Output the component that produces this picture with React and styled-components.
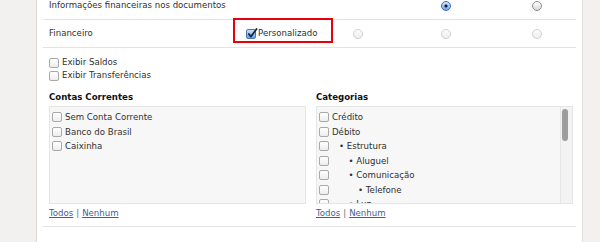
import React from "react";
import styled, { createGlobalStyle } from "styled-components";

const GlobalStyle = createGlobalStyle`
  html, body { margin: 0; padding: 0; background: #fff; }
  body {
    font-family: "DejaVu Sans", Verdana, sans-serif;
    font-size: 8.6px;
    color: #303030;
    overflow: hidden;
  }
`;

const Page = styled.div`
  display: flex;
  height: 242px;
  overflow: hidden;
`;

const SideLeft = styled.div`
  flex: none;
  width: 36px;
  background: #f3f1ef;
  border-right: 1px solid #dcd8d4;
`;

const SideRight = styled.div`
  flex: none;
  width: 17px;
  background: #f3f1ef;
  border-left: 1px solid #e4e0dc;
`;

const Main = styled.main`
  flex: 1;
  padding: 0 6px;
  overflow: hidden;
`;

/* the page is scrolled a little: the first row is cut at the top */
const Scrolled = styled.div`
  margin-top: -8px;
`;

const Row = styled.div`
  display: grid;
  grid-template-columns: 190px 100px 50px 126px 56px 1fr;
  align-items: center;
  height: 27px;
  border-bottom: 1px solid #e3e3e3;
`;

const Label = styled.div`
  padding-left: 6px;
  white-space: nowrap;
  line-height: 13px;
`;

const Highlighted = styled.div`
  position: relative;
  height: 100%;
  display: flex;
  align-items: center;
  gap: 2px;
  padding-left: 13px;
  line-height: 13px;

  &::before {
    content: "";
    position: absolute;
    left: 0;
    top: -2px;
    width: 100px;
    height: 25px;
    box-sizing: border-box;
    border: 2px solid #e8000b;
  }
`;

const Radio = styled.span`
  justify-self: center;
  width: 10px;
  height: 10px;
  box-sizing: border-box;
  border-radius: 50%;
  border: 1px solid
    ${(p) => (p.$checked ? "#3d6fb8" : p.$disabled ? "#d0d0d0" : "#8c8c8c")};
  background: ${(p) =>
    p.$checked
      ? "radial-gradient(circle, #111a2a 0 1.3px, transparent 1.8px), linear-gradient(#d4e6fb, #6ea7e8)"
      : p.$disabled
      ? "linear-gradient(#fcfcfc, #eeeeee)"
      : "linear-gradient(#ffffff, #d8d8d8)"};
`;

const BoxShell = styled.span`
  position: relative;
  flex: none;
  width: 10px;
  height: 10px;
  box-sizing: border-box;
  border-radius: 2px;
  border: 1px solid ${(p) => (p.$checked ? "#4a78b8" : "#a9a9a9")};
  background: ${(p) =>
    p.$checked
      ? "linear-gradient(#c9def8, #6a9fe0)"
      : "linear-gradient(#ffffff, #ededed)"};

  svg {
    position: absolute;
    left: 0;
    top: -2px;
  }
`;

function Checkbox({ checked }) {
  return (
    <BoxShell $checked={checked}>
      {checked && (
        <svg width="11" height="11" viewBox="0 0 11 11">
          <path
            d="M1.8 6 L4 8.6 L9.6 1"
            fill="none"
            stroke="#14213a"
            strokeWidth="1.7"
            strokeLinecap="round"
            strokeLinejoin="round"
          />
        </svg>
      )}
    </BoxShell>
  );
}

const Options = styled.div`
  padding: 8px 0 0 6px;
`;

const CheckRow = styled.div`
  display: flex;
  align-items: center;
  gap: 3px;
  height: 13px;
  line-height: 13px;
  white-space: nowrap;
`;

const Lists = styled.div`
  display: grid;
  grid-template-columns: 257px 257px;
  column-gap: 10px;
  padding: 8px 0 6px 6px;
  border-bottom: 1px solid #e3e3e3;
`;

const Heading = styled.div`
  height: 14px;
  line-height: 14px;
  margin-bottom: 2px;
  font-weight: bold;
  color: #111;
`;

const ListBox = styled.div`
  display: flex;
  height: 98px;
  box-sizing: border-box;
  border: 1px solid #e5e5e5;
  background: #f7f7f7;
  overflow: hidden;
`;

const Items = styled.div`
  flex: 1;
  padding: 3px 0 0 2px;
  overflow: hidden;
`;

const Item = styled.div`
  display: flex;
  align-items: center;
  gap: 3px;
  height: 14.5px;
  line-height: 14.5px;
  white-space: nowrap;
`;

const ItemText = styled.span`
  padding-left: ${(p) => (p.$level ? 7 + (p.$level - 1) * 9.5 : 0)}px;
`;

const Track = styled.div`
  flex: none;
  width: 11px;
  border-left: 1px solid #e6e6e6;
  background: #f3f3f3;
`;

const Thumb = styled.div`
  width: 6px;
  height: 32px;
  margin: 2px 0 0 1px;
  border-radius: 3px;
  background: #9d9d9d;
`;

const Links = styled.div`
  margin-top: 3px;
  height: 13px;
  line-height: 13px;
  color: #666;
`;

const Link = styled.a`
  color: #3f5f98;
  text-decoration: underline;
  cursor: pointer;
`;

const Sep = styled.span`
  margin: 0 3px;
`;

const contas = ["Sem Conta Corrente", "Banco do Brasil", "Caixinha"];

const categorias = [
  { name: "Crédito", level: 0 },
  { name: "Débito", level: 0 },
  { name: "Estrutura", level: 1 },
  { name: "Aluguel", level: 2 },
  { name: "Comunicação", level: 2 },
  { name: "Telefone", level: 3 },
  { name: "Luz", level: 2 },
];

function ListColumn({ title, items, scroll }) {
  return (
    <div>
      <Heading>{title}</Heading>
      <ListBox>
        <Items>
          {items.map((it) => (
            <Item key={it.name}>
              <Checkbox />
              <ItemText $level={it.level}>
                {it.level ? "• " : ""}
                {it.name}
              </ItemText>
            </Item>
          ))}
        </Items>
        {scroll && (
          <Track>
            <Thumb />
          </Track>
        )}
      </ListBox>
      <Links>
        <Link>Todos</Link>
        <Sep>|</Sep>
        <Link>Nenhum</Link>
      </Links>
    </div>
  );
}

export default function App() {
  return (
    <>
      <GlobalStyle />
      <Page>
        <SideLeft />
        <Main>
          <Scrolled>
            <Row>
              <Label>Informações financeiras nos documentos</Label>
              <span />
              <span />
              <Radio $checked />
              <Radio />
            </Row>
            <Row>
              <Label>Financeiro</Label>
              <Highlighted>
                <Checkbox checked />
                <span>Personalizado</span>
              </Highlighted>
              <Radio $disabled />
              <Radio $disabled />
              <Radio $disabled />
            </Row>
            <Options>
              <CheckRow>
                <Checkbox />
                <span>Exibir Saldos</span>
              </CheckRow>
              <CheckRow>
                <Checkbox />
                <span>Exibir Transferências</span>
              </CheckRow>
            </Options>
            <Lists>
              <ListColumn
                title="Contas Correntes"
                items={contas.map((name) => ({ name, level: 0 }))}
              />
              <ListColumn title="Categorias" items={categorias} scroll />
            </Lists>
          </Scrolled>
        </Main>
        <SideRight />
      </Page>
    </>
  );
}
